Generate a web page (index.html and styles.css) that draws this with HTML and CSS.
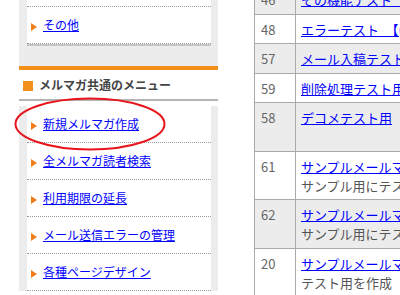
FILE: index.html
```html
<!DOCTYPE html>
<html>
  <head>
    <title>メルマガ管理</title>
    <link rel="stylesheet" href="styles.css">
  </head>
  <body>
    <div class="page">
      <div class="side">
        <div class="box box-top">
          <ul class="menu">
            <li><a href="#">その他</a></li>
          </ul>
        </div>
        <div class="common">
          <h3 class="side-title">メルマガ共通のメニュー</h3>
          <div class="box">
            <ul class="menu">
              <li><a href="#">新規メルマガ作成</a></li>
              <li><a href="#">全メルマガ読者検索</a></li>
              <li><a href="#">利用期限の延長</a></li>
              <li><a href="#">メール送信エラーの管理</a></li>
              <li><a href="#">各種ページデザイン</a></li>
            </ul>
          </div>
        </div>
      </div>
      <div class="main">
        <table class="list">
          <tr class="odd">
            <td class="no">46</td>
            <td><a href="#">その機能テスト【テスト】</a></td>
          </tr>
          <tr>
            <td class="no">48</td>
            <td><a href="#">エラーテスト　【(テスト)】</a></td>
          </tr>
          <tr class="odd">
            <td class="no">57</td>
            <td><a href="#">メール入稿テスト用メルマガ</a></td>
          </tr>
          <tr>
            <td class="no">59</td>
            <td><a href="#">削除処理テスト用メルマガ</a></td>
          </tr>
          <tr class="odd">
            <td class="no">58</td>
            <td><a href="#">デコメテスト用</a><br>&nbsp;</td>
          </tr>
          <tr>
            <td class="no">61</td>
            <td><a href="#">サンプルメールマガジン</a><br><span class="desc">サンプル用にテスト配信を行います</span></td>
          </tr>
          <tr class="odd">
            <td class="no">62</td>
            <td><a href="#">サンプルメールマガジン2</a><br><span class="desc">サンプル用にテスト配信を行います</span></td>
          </tr>
          <tr>
            <td class="no">20</td>
            <td><a href="#">サンプルメールマガジン3</a><br><span class="desc">テスト用を作成</span></td>
          </tr>
        </table>
      </div>
    </div>

    <!-- annotation circle -->
    <svg class="mark" width="160" height="60" viewBox="0 0 160 60">
      <ellipse cx="76" cy="27" rx="74.5" ry="25.5" fill="none" stroke="#e8141c" stroke-width="2"/>
    </svg>
  </body>
</html>
```

FILE: styles.css
```css
body {
  margin: 0;
  font-family: "Noto Sans CJK JP", "Noto Sans", sans-serif;
  background: #ffffff;
  overflow: hidden;
}
.page {
  display: flex;
  align-items: flex-start;
  gap: 36px;
  padding-left: 19px;
}
.side {
  flex: none;
  width: 199px;
}
.box {
  background: #ececec;
  padding: 0 7px 0 8px;
}
.box-top {
  padding-bottom: 20px;
}
.menu {
  list-style: none;
  margin: 0;
  padding: 0;
  background: #ffffff;
}
.box-top .menu {
  padding-top: 6px;
  border-bottom: 2px solid #c4c4c4;
}
.box-top .menu li:first-child {
  border-top: 1px dotted #9a9a9a;
}
.menu li {
  padding: 9px 0 9px 4px;
  font-size: 12px;
  line-height: 18px;
  border-bottom: 1px dotted #9a9a9a;
}
.menu li::before {
  content: "";
  display: inline-block;
  border-left: 6px solid #f07c1c;
  border-top: 4px solid transparent;
  border-bottom: 4px solid transparent;
  margin-right: 6px;
  vertical-align: -1px;
}
.menu a {
  color: #0000ff;
}
.side-title {
  margin: 0;
  padding: 6px 0 5px 4px;
  font-size: 12px;
  line-height: 18px;
  font-weight: bold;
  color: #444444;
  border-top: 4px solid #f39019;
  border-bottom: 2px solid #b4b4b4;
}
.side-title::before {
  content: "";
  display: inline-block;
  width: 10px;
  height: 10px;
  background: #f39019;
  margin-right: 6px;
  vertical-align: -1px;
}
.common .box {
  margin-top: 5px;
}
.main {
  flex: none;
}
.list {
  border-collapse: collapse;
  margin-top: -16px;
  width: 600px;
  font-size: 13px;
  line-height: 19px;
}
.list td {
  border: 1px solid #aaaaaa;
  padding: 5px 5px 4.5px 5px;
  vertical-align: top;
}
.list td.no {
  width: 29px;
  padding-left: 6px;
  color: #666666;
}
.list tr.odd td {
  background: #ececec;
}
.list a {
  color: #0000ff;
}
.list .desc {
  color: #555555;
}
.mark {
  position: absolute;
  left: 14px;
  top: 97px;
}
```
